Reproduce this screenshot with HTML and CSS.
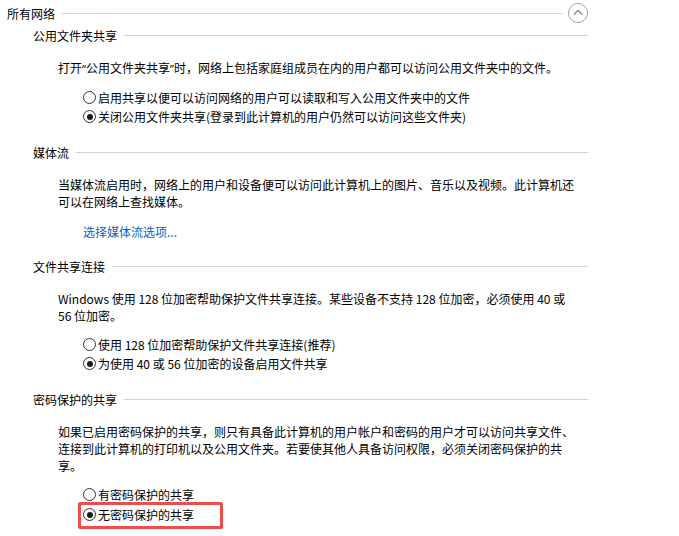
FILE: index.html
```html
<!DOCTYPE html>
<html lang="zh-CN">
<head>
    <meta charset="UTF-8">
    <meta name="viewport" content="width=device-width, initial-scale=1.0">
    <title>高级共享设置</title>
    <link rel="stylesheet" href="styles.css">
</head>
<body>
    <div class="page">
        <div class="group-head">
            <span class="group-title">所有网络</span>
            <span class="rule"></span>
            <button class="collapse" aria-label="折叠">
                <svg width="20" height="20" viewBox="0 0 20 20">
                    <circle cx="10" cy="10" r="9.5" fill="none" stroke="#a0a0a0"/>
                    <path d="M5.8 11.6 L10 7.4 L14.2 11.6" fill="none" stroke="#7c7c7c" stroke-width="1.3"/>
                </svg>
            </button>
        </div>

        <!-- 公用文件夹共享 -->
        <div class="section first">
            <div class="section-head"><span>公用文件夹共享</span><span class="rule"></span></div>
            <p class="desc">打开<span class="q">“</span>公用文件夹共享<span class="q">”</span>时，网络上包括家庭组成员在内的用户都可以访问公用文件夹中的文件。</p>
            <div class="options">
                <label class="option"><span class="radio"></span>启用共享以便可以访问网络的用户可以读取和写入公用文件夹中的文件</label>
                <label class="option"><span class="radio checked"></span>关闭公用文件夹共享(登录到此计算机的用户仍然可以访问这些文件夹)</label>
            </div>
        </div>

        <!-- 媒体流 -->
        <div class="section">
            <div class="section-head"><span>媒体流</span><span class="rule"></span></div>
            <p class="desc">当媒体流启用时，网络上的用户和设备便可以访问此计算机上的图片、音乐以及视频。此计算机还<br>可以在网络上查找媒体。</p>
            <a class="link" href="#">选择媒体流选项...</a>
        </div>

        <!-- 文件共享连接 -->
        <div class="section">
            <div class="section-head"><span>文件共享连接</span><span class="rule"></span></div>
            <p class="desc">Windows 使用 128 位加密帮助保护文件共享连接。某些设备不支持 128 位加密，必须使用 40 或<br>56 位加密。</p>
            <div class="options">
                <label class="option"><span class="radio"></span>使用 128 位加密帮助保护文件共享连接(推荐)</label>
                <label class="option"><span class="radio checked"></span>为使用 40 或 56 位加密的设备启用文件共享</label>
            </div>
        </div>

        <!-- 密码保护的共享 -->
        <div class="section">
            <div class="section-head"><span>密码保护的共享</span><span class="rule"></span></div>
            <p class="desc">如果已启用密码保护的共享，则只有具备此计算机的用户帐户和密码的用户才可以访问共享文件、<br>连接到此计算机的打印机以及公用文件夹。若要使其他人具备访问权限，必须关闭密码保护的共<br>享。</p>
            <div class="options">
                <label class="option"><span class="radio"></span>有密码保护的共享</label>
                <div class="marked">
                    <label class="option"><span class="radio checked"></span>无密码保护的共享</label>
                </div>
            </div>
        </div>
    </div>
</body>
</html>
```

FILE: styles.css
```css
html, body {
    overflow: hidden;
}
body {
    margin: 0;
    background-color: white;
    color: #000;
    font-family: "Noto Sans CJK SC", "Noto Sans", sans-serif;
    font-size: 12px;
}
.page {
    width: 581px;
    padding: 3px 0 0 7px;
}
.group-head {
    display: flex;
    align-items: center;
    height: 20px;
}
.group-title {
    white-space: nowrap;
}
.rule {
    flex: 1;
    height: 1px;
    background-color: #d4d4d4;
    margin-left: 6px;
}
.collapse {
    width: 20px;
    height: 20px;
    padding: 0;
    margin-left: 5px;
    border: none;
    background: none;
    display: block;
}
.collapse svg {
    display: block;
}

.section {
    margin-top: 18px;
    padding-left: 26px;
}
.section.first {
    margin-top: 4px;
}
.section-head {
    display: flex;
    align-items: center;
    line-height: 17px;
    white-space: nowrap;
}
.section-head .rule {
    margin-left: 7px;
}
.desc {
    margin: 15px 0 0 25px;
    line-height: 17px;
    white-space: nowrap;
}
.q {
    font-family: "Noto Sans", sans-serif;
    font-size: 11px;
}
.link {
    display: block;
    margin: 13px 0 0 50px;
    line-height: 17px;
    color: #0066cc;
    text-decoration: none;
}

/* radio list */
.options {
    margin: 11px 0 0 50px;
}
.option {
    display: flex;
    align-items: center;
    height: 19px;
    white-space: nowrap;
}
.radio {
    width: 11px;
    height: 11px;
    border: 1px solid #333;
    border-radius: 50%;
    margin-right: 2px;
    position: relative;
    flex: none;
}
.radio.checked::after {
    content: "";
    position: absolute;
    top: 2.5px;
    left: 2.5px;
    width: 6px;
    height: 6px;
    border-radius: 50%;
    background-color: #1a1a1a;
}

/* red annotation box round the chosen option */
.marked {
    width: 137px;
    margin: -2px 0 0 -5px;
    padding: 0 0 2px 2px;
    border: 3px solid #ee4d4d;
    border-radius: 2px;
}
```
